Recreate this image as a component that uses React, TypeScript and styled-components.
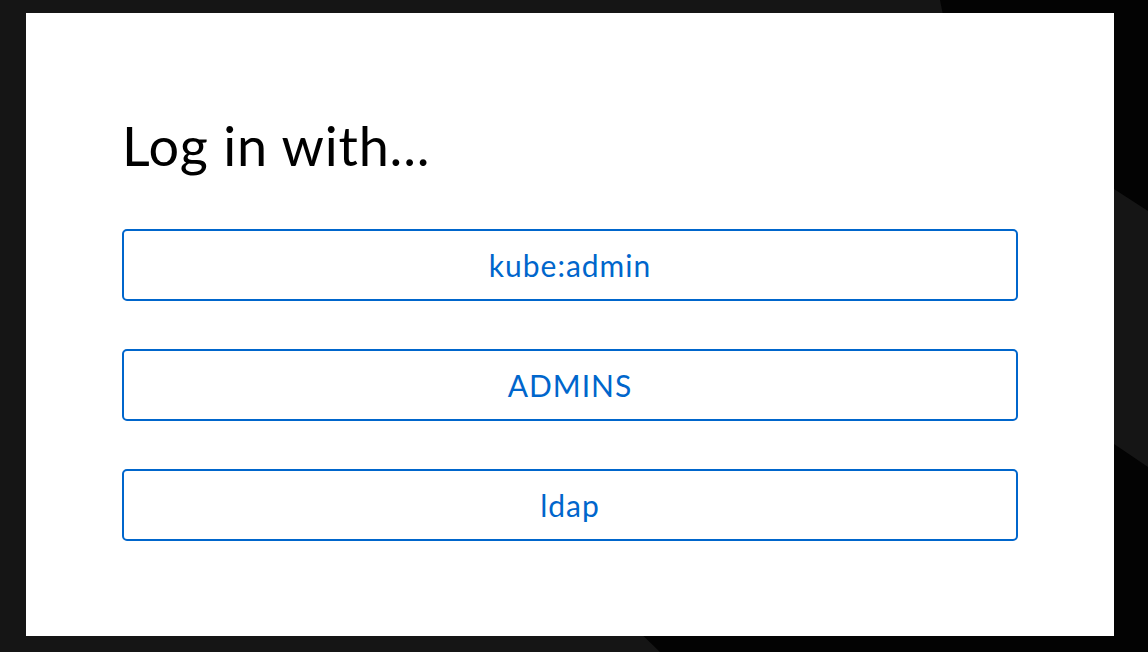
import React from "react";
import styled, { createGlobalStyle } from "styled-components";

const bgSvg = `<svg xmlns="http://www.w3.org/2000/svg" width="1148" height="652" viewBox="0 0 1148 652"><rect width="1148" height="652" fill="#151515"/><polygon points="940,0 1148,0 1148,211 1114,189 990,110 960,100" fill="#030303"/><polygon points="660,652 1148,652 1148,467 1114,444 800,400 630,623" fill="#030303"/></svg>`;

const GlobalStyle = createGlobalStyle`
  html, body {
    margin: 0;
    padding: 0;
  }
  body {
    background: #151515;
    font-family: "Red Hat Text", Lato, "Open Sans", sans-serif;
  }
`;

const Page = styled.div`
  width: 1148px;
  height: 652px;
  box-sizing: border-box;
  padding: 13px 34px 16px 26px;
  display: flex;
  background-image: url("data:image/svg+xml,${encodeURIComponent(bgSvg)}");
  background-repeat: no-repeat;
`;

const Card = styled.main`
  flex: 1;
  background: #ffffff;
  box-sizing: border-box;
  padding: 101px 96px 0 96px;
  display: flex;
  flex-direction: column;
`;

const Title = styled.h1`
  margin: 0 0 51px 0;
  font-family: Lato, "Open Sans", sans-serif;
  font-weight: 400;
  font-size: 54px;
  letter-spacing: 0.8px;
  line-height: 64px;
  color: #000000;
`;

const ButtonList = styled.div`
  display: flex;
  flex-direction: column;
  gap: 48px;
`;

const ProviderButton = styled.button`
  height: 72px;
  width: 100%;
  box-sizing: border-box;
  background: #ffffff;
  border: 2px solid #0066cc;
  border-radius: 5px;
  color: #0066cc;
  font-family: Lato, "Open Sans", sans-serif;
  font-size: 30px;
  letter-spacing: 1px;
  font-weight: 400;
  cursor: pointer;
  padding: 0;
`;

const providers = ["kube:admin", "ADMINS", "ldap"];

export default function App() {
  return (
    <>
      <GlobalStyle />
      <Page>
        <Card>
          <Title>Log in with...</Title>
          <ButtonList>
            {providers.map((p) => (
              <ProviderButton key={p}>{p}</ProviderButton>
            ))}
          </ButtonList>
        </Card>
      </Page>
    </>
  );
}
